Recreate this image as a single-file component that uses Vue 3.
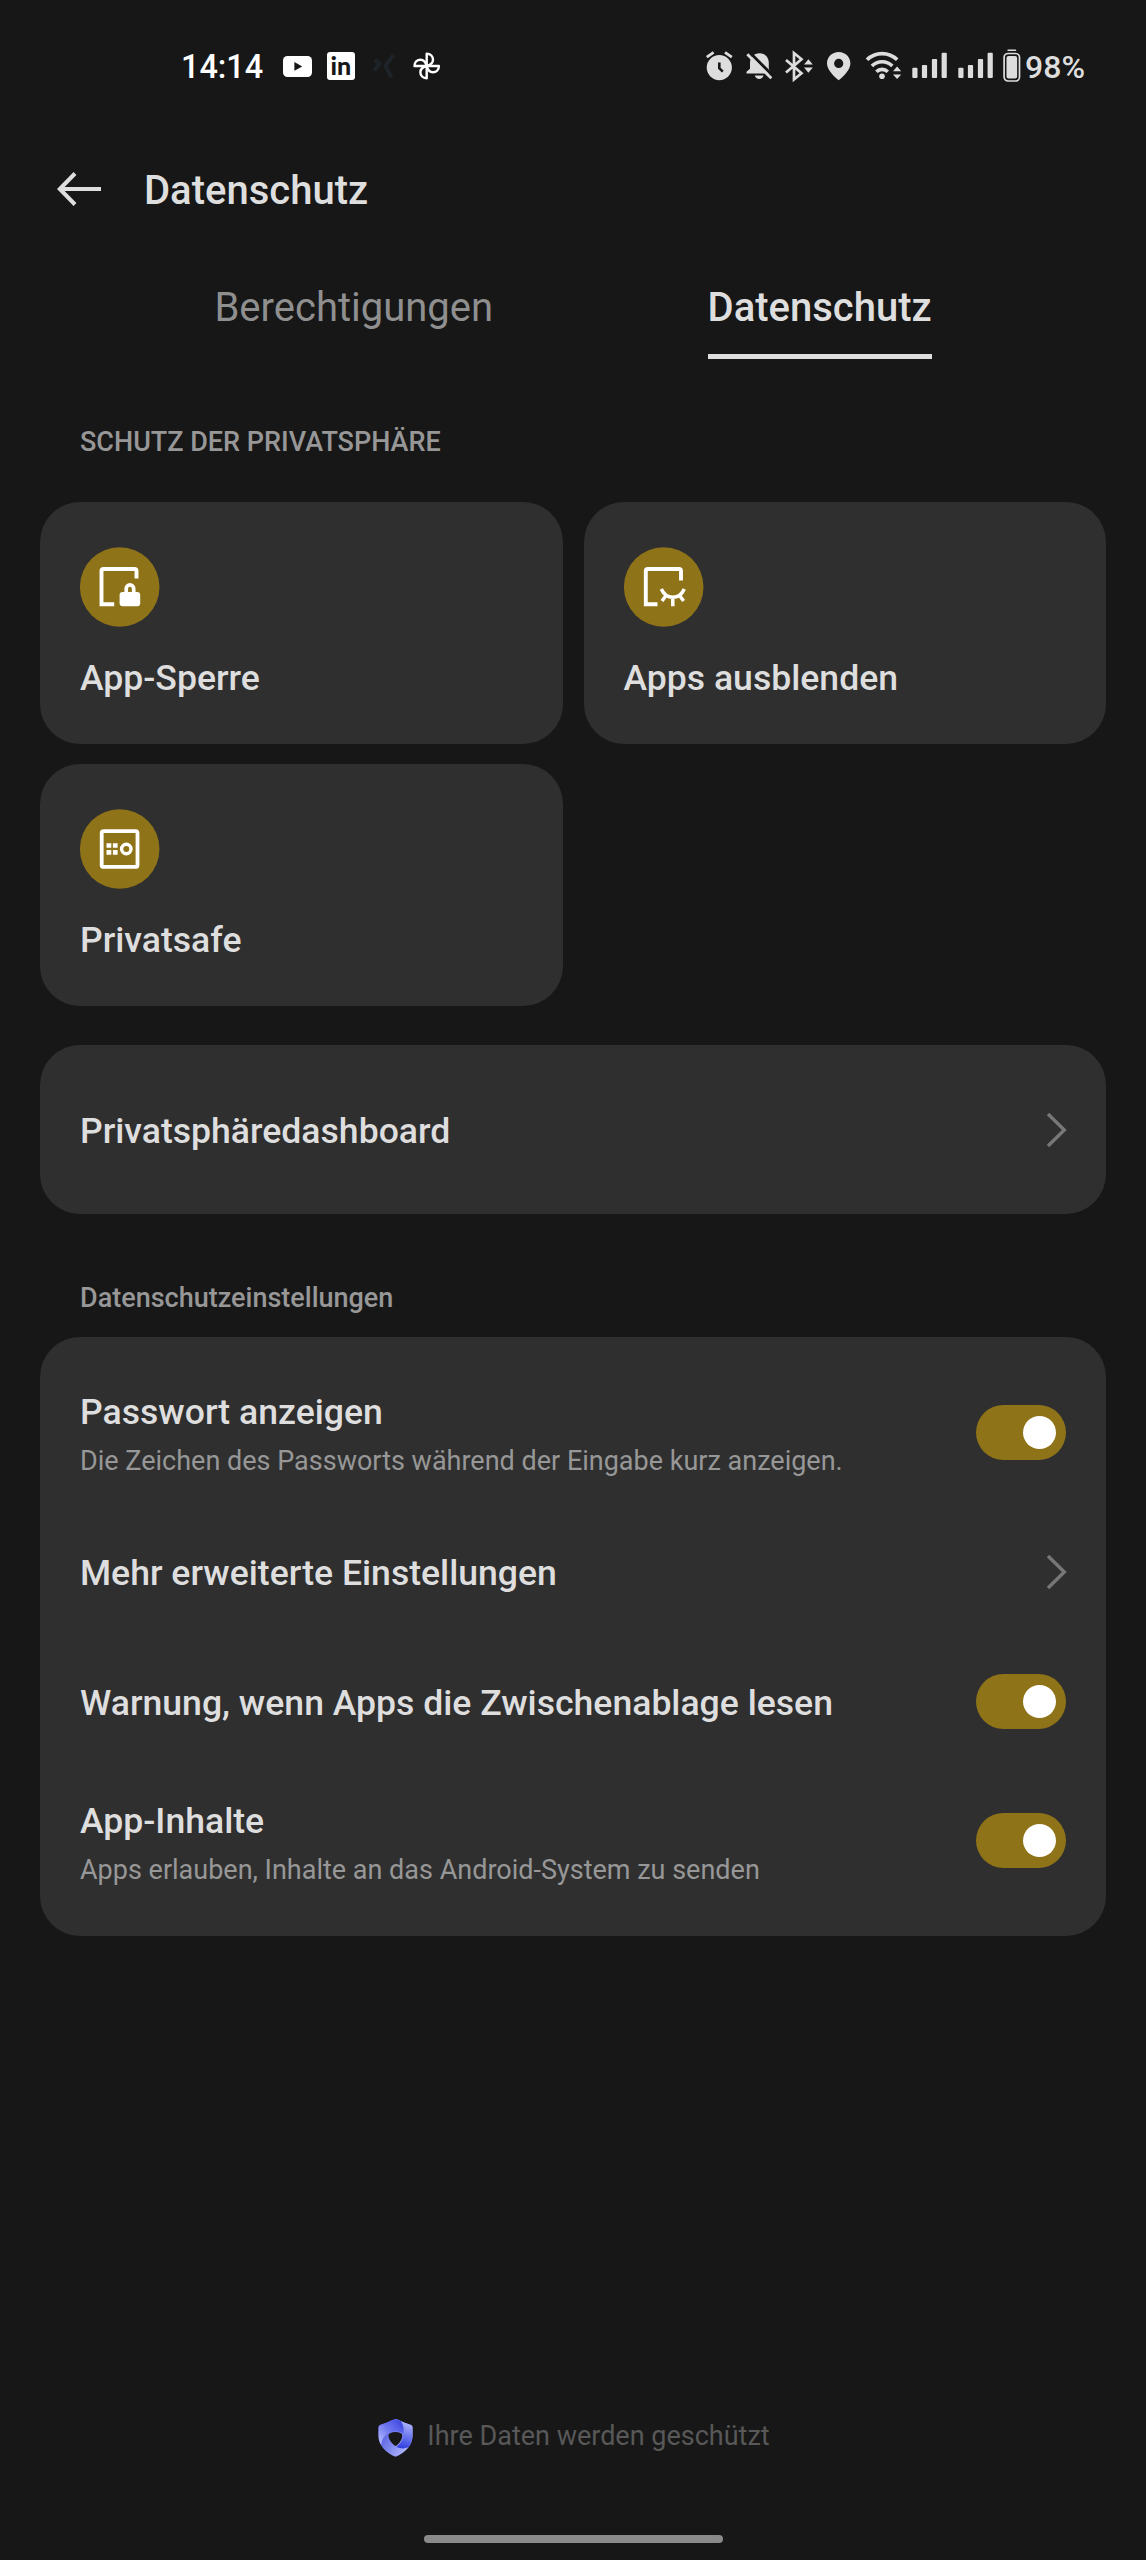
<template>
  <div class="screen">
    <div class="status-bar">
      <div class="status-left">
        <span class="time">14:14</span>
        <svg class="ic-youtube" width="29" height="21" viewBox="0 0 29 21">
          <rect width="29" height="21" rx="4.5" fill="#fff" />
          <path d="M11.4 6.1v8.6l7.8-4.3z" fill="#171717" />
        </svg>
        <svg class="ic-linkedin" width="28" height="28" viewBox="0 0 28 28">
          <rect width="28" height="28" rx="3" fill="#fff" />
          <text x="13.8" y="22.8" class="in-mark">in</text>
        </svg>
        <svg class="ic-xing" width="24" height="26" viewBox="0 0 24 26">
          <path d="M3 6.5l4.5 4.5L2 17.5M21.5 1.5L13.5 13l6 11.5" fill="none" stroke="#1d2329" stroke-width="4" />
        </svg>
        <svg class="ic-photos" width="28" height="34" viewBox="0 0 28 34">
          <g fill="none" stroke="#fff" stroke-width="2.4" stroke-linejoin="round">
            <path v-for="a in [0, 90, 180, 270]" :key="a" :transform="`rotate(${a} 13.7 17)`" d="M13.7 17V4.8c4 0 6.300 2.700 6.300 6 0 2.800-1.900 5-6.300 6.200" />
          </g>
        </svg>
      </div>
      <div class="status-right">
        <svg width="28" height="34" viewBox="0 0 28 34">
          <circle cx="14.3" cy="18.6" r="12.6" fill="#ddd" />
          <path d="M1.8 8.2l6.8-4.8M20 3.4l6.8 4.8" stroke="#ddd" stroke-width="2.8" />
          <path d="M14.3 13.5v5.7l3.5 3.4" fill="none" stroke="#171717" stroke-width="2.6" />
        </svg>
        <svg class="ic-bell" width="28" height="34" viewBox="0 0 28 34">
          <path d="M1.5 24.4v-1.6l3.5-3V14C5 8.5 9 4.3 14.5 4.3S23.8 8.5 23.8 14v5.8l2 4.6zM9.8 26.6h8.7c-.6 2.2-2.2 3.4-4.3 3.4s-3.8-1.2-4.4-3.400z" fill="#ddd" />
          <path d="M4.500 3.300l24 24" stroke="#171717" stroke-width="3" />
          <path d="M2.300 5.300l24 24" stroke="#ddd" stroke-width="2.800" />
        </svg>
        <svg class="ic-bt" width="28" height="34" viewBox="0 0 28 34">
          <path d="M1 11l15.500 13.300L9 30.500V4l7.500 6.200L1 23.500" fill="none" stroke="#ddd" stroke-width="2.700" />
          <path d="M19 15.400h8.800l-4.400-5.200zM19 18.600h8.800l-4.400 5.200z" fill="#ddd" />
        </svg>
        <svg class="ic-pin" width="24" height="34" viewBox="0 0 24 34">
          <path fill-rule="evenodd" d="M11.700 3C5 3 0 8 0 14.400 0 20.500 7 27.500 11.700 31.300c4.700-3.800 11.700-10.800 11.700-16.900C23.400 8 18.400 3 11.700 3zm0 6.800a4.600 4.600 0 110 9.200 4.600 4.600 0 010-9.200z" fill="#ddd" />
        </svg>
        <svg class="ic-wifi" width="36" height="34" viewBox="0 0 36 34">
          <g fill="none" stroke="#ddd" stroke-width="3.600">
            <path d="M1 10.800a21.500 21.500 0 0130.200 0" />
            <path d="M5.900 17a14.500 14.500 0 0120.400 0" />
            <path d="M10.400 22.700a8.200 8.200 0 0111.400 0" />
          </g>
          <circle cx="16" cy="27.200" r="2.800" fill="#ddd" />
          <path d="M27 22.200h8.200l-4.100-4.700zM27 25.400h8.200l-4.100 4.700z" fill="#ddd" />
        </svg>
        <svg v-for="n in 2" :key="n" class="ic-signal" width="36" height="34" viewBox="0 0 36 34">
          <g fill="#ddd">
            <rect x=".3" y="18.700" width="5.200" height="10.200" rx="1" />
            <rect x="9.900" y="16" width="5.200" height="12.900" rx="1" />
            <rect x="19.900" y="10" width="5.200" height="18.900" rx="1" />
            <rect x="29.600" y="3.700" width="5.200" height="25.200" rx="1" />
          </g>
        </svg>
        <svg class="ic-battery" width="18" height="34" viewBox="0 0 18 34">
          <rect x="4.300" y=".4" width="9" height="1.700" rx=".8" fill="#ddd" />
          <rect x="1.100" y="4.500" width="15.400" height="27.500" rx="4" fill="none" stroke="#ddd" stroke-width="1.700" />
          <rect x="3.500" y="7" width="10.600" height="22.500" rx="2" fill="#ddd" />
        </svg>
        <span class="battery-text">98%</span>
      </div>
    </div>

    <header class="header">
      <svg width="44" height="36" viewBox="0 0 44 36">
        <path d="M44 18H3M18 2.500L2.800 18 18 33.500" fill="none" stroke="#dedede" stroke-width="4" />
      </svg>
      <h1>Datenschutz</h1>
    </header>

    <nav class="tabs">
      <span
        v-for="tab in tabs"
        :key="tab"
        class="tab"
        :class="{ active: tab === activeTab }"
        @click="activeTab = tab"
      >{{ tab }}</span>
    </nav>

    <h2 class="section-label first">SCHUTZ DER PRIVATSPHÄRE</h2>
    <div class="tiles">
      <div v-for="tile in tiles" :key="tile.label" class="card tile">
        <svg class="tile-icon" width="80" height="80" viewBox="0 0 80 80" fill="none" stroke="#fff">
          <circle cx="39.700" cy="40" r="39.800" fill="#8e7318" stroke="none" />
          <template v-if="tile.icon === 'lock'">
            <path d="M34.200 57.200H21.500V24q0-2 2-2H54.500q2 0 2 2v7.500" stroke-width="3.900" />
            <path d="M46.200 47v-5.300a3.750 3.750 0 017.500 0V47" stroke-width="3.700" />
            <rect x="39.600" y="45" width="20.600" height="14.200" rx="3" fill="#fff" stroke="none" />
          </template>
          <template v-else-if="tile.icon === 'hidden'">
            <path d="M33.500 57.200H21.800V24q0-2 2-2H55q2 0 2 2v9.500" stroke-width="3.900" />
            <path d="M37.300 42c2.400 5.300 6.300 8.200 11.500 8.200S57.900 47.300 60.300 42M42 48.500l-4 5.500M48.800 50v9.200M55.600 48.500l4 5.500" stroke-width="3.500" />
          </template>
          <template v-else>
            <rect x="21.700" y="22.200" width="35.800" height="35.700" rx="2" stroke-width="3.800" />
            <path d="M26.500 34.200h4.800v4.600h-4.800zM32.900 34.200h4.700v4.600h-4.700zM26.500 41.100h4.800v4.600h-4.800zM32.900 41.100h4.700v4.600h-4.700z" fill="#fff" stroke="none" />
            <circle cx="46.300" cy="40" r="4.700" stroke-width="3.400" />
          </template>
        </svg>
        <span class="item-title">{{ tile.label }}</span>
      </div>
    </div>

    <div class="card list dashboard">
      <div class="row">
        <div class="row-text">
          <span class="item-title">Privatsphäredashboard</span>
        </div>
        <svg class="chevron" width="20" height="36" viewBox="0 0 20 36">
          <path d="M2 2l16.300 16L2 34" />
        </svg>
      </div>
    </div>

    <h2 class="section-label">Datenschutzeinstellungen</h2>
    <div class="card list">
      <div v-for="item in settings" :key="item.title" class="row" :class="{ double: item.desc }">
        <div class="row-text">
          <span class="item-title">{{ item.title }}</span>
          <span v-if="item.desc" class="item-desc">{{ item.desc }}</span>
        </div>
        <div v-if="item.toggle" class="switch" :class="{ on: item.on }" @click="item.on = !item.on">
          <span class="knob"></span>
        </div>
        <svg v-else class="chevron" width="20" height="36" viewBox="0 0 20 36">
          <path d="M2 2l16.300 16L2 34" />
        </svg>
      </div>
    </div>

    <footer class="footer">
      <svg class="shield" width="35" height="38" viewBox="0 0 35 38">
        <defs>
          <linearGradient id="bladeTop" x1="1" y1="0" x2="0" y2="1">
            <stop offset="0" stop-color="#343fdc" />
            <stop offset=".5" stop-color="#7078f0" />
            <stop offset="1" stop-color="#c0c5ff" />
          </linearGradient>
          <linearGradient id="bladeRight" x1=".6" y1="0" x2=".4" y2="1">
            <stop offset="0" stop-color="#bcc2ff" />
            <stop offset="1" stop-color="#2f3ddf" />
          </linearGradient>
          <linearGradient id="bladeBottom" x1="0" y1="0" x2="1" y2=".6">
            <stop offset="0" stop-color="#3842d8" />
            <stop offset="1" stop-color="#b4baff" />
          </linearGradient>
          <clipPath id="shieldClip">
            <path d="M17.500.3c3.500 0 5 2.700 15.500 5.700q1.500.6 1.500 2.500v8c0 10-7.500 17.500-17 21.200C8 34 .5 26.500.5 16.500v-8Q.5 6.600 2 6C12.500 3 14 .3 17.500.3z" />
          </clipPath>
        </defs>
        <g clip-path="url(#shieldClip)">
          <rect width="35" height="38" fill="url(#bladeBottom)" />
          <path d="M17 0h18v24c-4 6-11 6.500-16.500 4 5-4 7-9 6.500-14C24.500 7 21 3 17 0z" fill="url(#bladeRight)" />
          <path d="M0 0h21c4.500 4 5.500 10 4 15-3-3-8-3.500-12.500-1.500C6.500 15.500 4 20 3 26L0 22z" fill="url(#bladeTop)" />
          <path d="M12 14.300q5.500-2.500 11 0 1.800.8 1.300 3.200-1.200 5.500-5.300 8.700-1.400 1-2.800 0-4.600-3.500-5.700-8.600-.4-2.300 1.500-3.300z" fill="#171717" />
        </g>
      </svg>
      <span>Ihre Daten werden geschützt</span>
    </footer>
    <div class="home-bar"></div>
  </div>
</template>

<script setup>
import { ref } from 'vue'

const tabs = ['Berechtigungen', 'Datenschutz']
const activeTab = ref('Datenschutz')

const tiles = [
  { label: 'App-Sperre', icon: 'lock' },
  { label: 'Apps ausblenden', icon: 'hidden' },
  { label: 'Privatsafe', icon: 'safe' },
]

const settings = ref([
  {
    title: 'Passwort anzeigen',
    desc: 'Die Zeichen des Passworts während der Eingabe kurz anzeigen.',
    toggle: true,
    on: true,
  },
  { title: 'Mehr erweiterte Einstellungen' },
  { title: 'Warnung, wenn Apps die Zwischenablage lesen', toggle: true, on: true },
  {
    title: 'App-Inhalte',
    desc: 'Apps erlauben, Inhalte an das Android-System zu senden',
    toggle: true,
    on: true,
  },
])
</script>

<style>
body {
  margin: 0;
  background: #171717;
}
</style>

<style scoped>
.screen {
  display: flex;
  flex-direction: column;
  box-sizing: border-box;
  width: 1146px;
  height: 2560px;
  padding: 0 40px 17px;
  background: #171717;
  color: #dedede;
  font-family: Roboto, 'Noto Sans', sans-serif;
}

.screen svg {
  display: block;
  flex-shrink: 0;
  overflow: visible;
}

.status-bar {
  display: flex;
  justify-content: space-between;
  height: 132px;
  padding: 0 20px 0 141px;
}

.status-left,
.status-right {
  display: flex;
  align-items: center;
  height: 132px;
}

.time {
  width: 102px;
  padding-top: 1px;
  color: #fff;
  font-size: 32.4px;
  font-weight: 500;
  line-height: 38px;
}

.ic-linkedin { margin-left: 15px; }
.ic-xing { margin-left: 17px; }
.ic-photos { margin-left: 17px; }

.in-mark {
  fill: #171717;
  font-family: Lato, sans-serif;
  font-size: 25px;
  font-weight: 900;
  text-anchor: middle;
}

.ic-bell { margin-left: 12px; }
.ic-bt { margin-left: 12px; }
.ic-pin { margin-left: 14px; }
.ic-wifi { margin-left: 15px; }
.ic-signal { margin-left: 10px; }
.ic-battery { margin-left: 9px; }

.battery-text {
  width: 61px;
  margin-left: 4px;
  padding-top: 1px;
  color: #ddd;
  font-size: 32px;
  font-weight: 500;
  line-height: 38px;
  white-space: nowrap;
}

.header {
  display: flex;
  align-items: center;
  gap: 43px;
  height: 114px;
  padding-left: 17px;
}

.header h1 {
  margin: 0;
  padding-top: 3px;
  font-size: 40px;
  font-weight: 500;
  line-height: 48px;
}

.tabs {
  display: flex;
  justify-content: space-evenly;
  height: 75px;
  margin: 38px -40px 0;
}

.tab {
  border-bottom: 5px solid transparent;
  color: #8f8f8f;
  font-size: 40px;
  line-height: 48px;
}

.tab.active {
  border-color: #dedede;
  color: #dedede;
  font-weight: 500;
}

.section-label {
  margin: 54px 40px 9px;
  color: #979797;
  font-size: 27px;
  font-weight: 500;
  line-height: 60px;
}

.section-label.first {
  margin: 53px 40px 29.5px;
}

.card {
  border-radius: 40px;
  background: #2f2f2f;
}

.tiles {
  display: grid;
  grid-template-columns: 1fr 1fr;
  gap: 20px 21px;
}

.tile {
  display: flex;
  flex-direction: column;
  gap: 30px;
  box-sizing: border-box;
  height: 242px;
  padding: 45px 40px 0;
}

.item-title {
  font-size: 35.6px;
  font-weight: 500;
  line-height: 42px;
}

.list {
  padding: 20px 40px;
}

.dashboard {
  margin-top: 39.5px;
}

.row {
  display: flex;
  align-items: center;
  justify-content: space-between;
  height: 129.4px;
}

.row.double {
  height: 149.8px;
}

.row-text {
  display: flex;
  flex-direction: column;
  gap: 11px;
  padding-top: 3px;
}

.double .row-text {
  padding-top: 5px;
}

.item-desc {
  color: #979797;
  font-size: 27px;
  line-height: 34px;
}

.chevron path {
  fill: none;
  stroke: #777;
  stroke-width: 3.4;
}

.switch {
  display: flex;
  align-items: center;
  box-sizing: border-box;
  width: 90px;
  height: 55px;
  padding: 0 10px;
  border-radius: 28px;
  background: #555;
}

.switch.on {
  justify-content: flex-end;
  background: #8e7318;
}

.knob {
  width: 33px;
  height: 33px;
  border-radius: 50%;
  background: #fff;
}

.footer {
  display: flex;
  align-items: flex-start;
  justify-content: center;
  gap: 14px;
  margin-top: auto;
  padding-left: 2px;
  color: #585858;
  font-size: 27px;
  line-height: 34px;
}

.home-bar {
  align-self: center;
  width: 299px;
  height: 8px;
  margin-top: 78px;
  border-radius: 4px;
  background: #8a8a8a;
}
</style>
